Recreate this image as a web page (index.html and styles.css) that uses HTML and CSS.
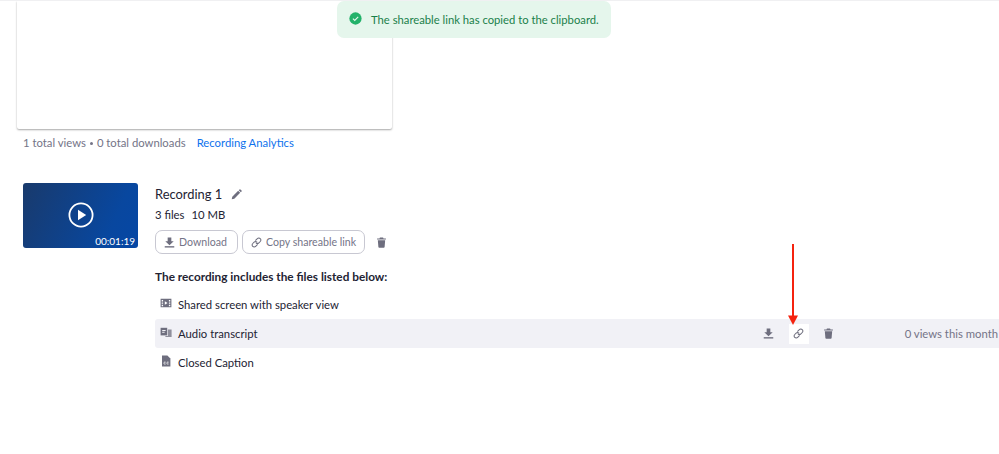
FILE: index.html
```html
<!DOCTYPE html>
<html lang="en">
<head>
<meta charset="utf-8">
<title>Recording</title>
<link rel="stylesheet" href="styles.css">
</head>
<body>
<svg class="defs" width="0" height="0" aria-hidden="true">
  <symbol id="i-download" viewBox="0 0 12 12"><path d="M4 0.5h4v4h2.6L6 9 1.4 4.5H4z"/><rect x="0.8" y="10" width="10.4" height="1.5"/></symbol>
  <symbol id="i-link" viewBox="0 0 12 12"><g fill="none" stroke="currentColor" stroke-width="1.1" stroke-linecap="round"><path d="M5 3.6 6.9 1.7a2.2 2.2 0 0 1 3.2 0 2.2 2.2 0 0 1 0 3.2L8.6 6.4a2.2 2.2 0 0 1-3.1 0"/><path d="M7 8.4 5.1 10.3a2.2 2.2 0 0 1-3.2 0 2.2 2.2 0 0 1 0-3.2L3.4 5.6a2.2 2.2 0 0 1 3.1 0"/></g></symbol>
  <symbol id="i-trash" viewBox="0 0 12 12"><path d="M4.3 0.6h3.4l.5.9h2.6v1.3H1.2V1.5h2.6zM2 3.5h8l-.6 7.4a.9.9 0 0 1-.9.7h-5a.9.9 0 0 1-.9-.7z"/></symbol>
</svg>

<div class="toast">
  <svg class="toast-icon" viewBox="0 0 14 14"><circle cx="7" cy="7" r="6.6" fill="#23b26a"/><path d="M4.2 7.1 6.2 9 9.9 5.2" fill="none" stroke="#e8f7ee" stroke-width="1.2"/></svg>
  <span>The shareable link has copied to the clipboard.</span>
</div>

<main class="page">
  <div class="player"></div>
  <div class="stats">
    <span>1 total views</span><span class="dot"></span><span>0 total downloads</span>
    <a class="analytics">Recording Analytics</a>
  </div>

  <section class="recording">
    <div class="thumb">
      <svg class="play" viewBox="0 0 26 26"><circle cx="13" cy="13" r="11.6" fill="none" stroke="#fff" stroke-width="1.8"/><path d="M10 7.8v10.4l8.2-5.2z" fill="#fff"/></svg>
      <span class="duration">00:01:19</span>
    </div>
    <div class="info">
      <div class="title">
        <span>Recording 1</span>
        <svg class="pencil" viewBox="0 0 12 12"><path d="M0.8 11.2 1.4 8.4 7.8 2l2.2 2.2-6.4 6.4zM8.5 1.3l.8-.8a.7.7 0 0 1 1 0l1.2 1.2a.7.7 0 0 1 0 1l-.8.8z"/></svg>
      </div>
      <div class="meta"><span>3 files</span><span>10 MB</span></div>
      <div class="actions">
        <button class="btn btn-download"><svg class="ico"><use href="#i-download"/></svg>Download</button>
        <button class="btn btn-copy"><svg class="ico"><use href="#i-link"/></svg>Copy shareable link</button>
        <svg class="ico trash"><use href="#i-trash"/></svg>
      </div>
      <p class="heading">The recording includes the files listed below:</p>
      <ul class="files">
        <li class="file">
          <svg class="ftype" viewBox="0 0 12 12"><path fill-rule="evenodd" d="M0.6 1.8h10.8v8.4H0.6zM1.7 3v1.4h1.4V3zm0 2.4v1.4h1.4V5.4zm0 2.4v1.4h1.4V7.8zM8.9 3v1.4h1.4V3zm0 2.4v1.4h1.4V5.4zm0 2.4v1.4h1.4V7.8zM4.8 4.2v3.6L7.6 6z"/></svg>
          <span>Shared screen with speaker view</span>
        </li>
        <li class="file active">
          <svg class="ftype" viewBox="0 0 12 12"><path d="M0.6 1.8h6.6v7.6H0.6z"/><path d="M7.9 3.6h3.7v7.4H5.4V10h2.5z" opacity=".75"/><path d="M2.2 4h3.4v.9H2.2zM2.2 5.8h2.4v.9H2.2z" fill="#f1f1f6"/></svg>
          <span>Audio transcript</span>
          <div class="file-tools">
            <span class="tool"><svg class="ico"><use href="#i-download"/></svg></span>
            <span class="tool selected"><svg class="ico"><use href="#i-link"/></svg></span>
            <span class="tool"><svg class="ico"><use href="#i-trash"/></svg></span>
          </div>
          <span class="views">0 views this month</span>
        </li>
        <li class="file">
          <svg class="ftype" viewBox="0 0 12 12"><path d="M2 0.6h5.4L10.4 3.6v8H2z"/><path d="M5.6 7.2a1.1 1.1 0 1 0 0 1.8M8.6 7.2a1.1 1.1 0 1 0 0 1.8" fill="none" stroke="#fff" stroke-width=".8"/></svg>
          <span>Closed Caption</span>
        </li>
      </ul>
    </div>
  </section>
</main>

<svg class="arrow" viewBox="0 0 10 82"><rect x="4" y="0" width="2" height="72" fill="#f5230f"/><path d="M0 71.5h10L5 81z" fill="#f5230f"/></svg>
</body>
</html>
```
FILE: styles.css
```css
* { box-sizing: border-box; }
html, body { margin: 0; padding: 0; }
body {
  width: 999px;
  height: 454px;
  overflow: hidden;
  position: relative;
  background: #fff;
  border-top: 1px solid #f0f0f2;
  font-family: Lato, "Noto Sans", sans-serif;
  font-size: 11.3px;
  color: #232333;
}
.defs { position: absolute; }

.toast {
  position: absolute;
  left: 337px;
  top: 0;
  width: 274px;
  height: 37px;
  display: flex;
  align-items: center;
  gap: 9px;
  padding: 0 0 0 12px;
  background: #e5f6ec;
  border-radius: 7px;
  color: #19804a;
  font-size: 11.25px;
  white-space: nowrap;
}
.toast-icon { width: 13px; height: 13px; margin-top: -3px; }

.page { padding-left: 17px; }
.player {
  width: 375px;
  height: 128px;
  background: #fff;
  box-shadow: 0 1px 2px rgba(0, 0, 0, .35);
  border-radius: 0 0 2px 2px;
}
.stats {
  display: flex;
  align-items: center;
  margin: 5px 0 0 6px;
  height: 17px;
  color: #747487;
}
.dot { width: 3px; height: 3px; border-radius: 50%; background: #747487; margin: 2px 4px 0; }
.analytics { margin-left: 11px; color: #0e72ed; }

.recording { display: flex; margin: 32px 0 0 6px; align-items: flex-start; }
.thumb {
  position: relative;
  width: 115px;
  height: 65px;
  border-radius: 3px;
  background: linear-gradient(115deg, #193a6c 0%, #08479f 75%, #0647a4 100%);
  display: flex;
  align-items: center;
  justify-content: center;
  flex: none;
}
.play { width: 26px; height: 26px; margin-top: -2px; }
.duration {
  position: absolute;
  right: 3px;
  bottom: 0;
  color: #fff;
  font-size: 10px;
  line-height: 14px;
}
.info { margin-left: 17px; flex: 1; }
.title {
  display: flex;
  align-items: center;
  gap: 9px;
  height: 22px;
  font-size: 12.9px;
}
.pencil { width: 11px; height: 11px; fill: #6e6e7e; }
.meta { display: flex; gap: 7px; height: 18px; margin-top: 1px; line-height: 18px; }
.actions { display: flex; align-items: center; gap: 4px; margin-top: 6px; }
.btn {
  display: flex;
  align-items: center;
  gap: 4px;
  height: 24px;
  padding: 0;
  background: #fff;
  border: 1px solid #c8c8d2;
  border-radius: 7px;
  font: inherit;
  font-size: 10.6px;
  color: #747487;
}
.btn-download { width: 83px; padding-left: 8px; }
.btn-copy { width: 123px; padding-left: 8px; }
.ico { width: 11px; height: 11px; fill: #6e6e7e; color: #6e6e7e; flex: none; }
.trash { margin-left: 7px; }
.heading { margin: 15px 0 0; height: 16px; line-height: 16px; font-size: 11.8px; font-weight: 700; }
.files { list-style: none; margin: 5px 0 0; padding: 0; }
.file {
  display: flex;
  align-items: center;
  height: 29px;
  padding-left: 5px;
  white-space: nowrap;
}
.active { background: #f1f1f6; border-radius: 3px 0 0 3px; }
.ftype { width: 12px; height: 12px; fill: #6e6e7e; margin: -3px 6px 0 0; flex: none; }
.file-tools { display: flex; align-items: center; gap: 10px; margin-left: auto; }
.tool { width: 20px; height: 20px; display: flex; align-items: center; justify-content: center; }
.selected { background: #fff; }
.views { margin-left: 66px; margin-right: 1px; color: #747487; }

.arrow { position: absolute; left: 788px; top: 243px; width: 10px; height: 82px; }
```
